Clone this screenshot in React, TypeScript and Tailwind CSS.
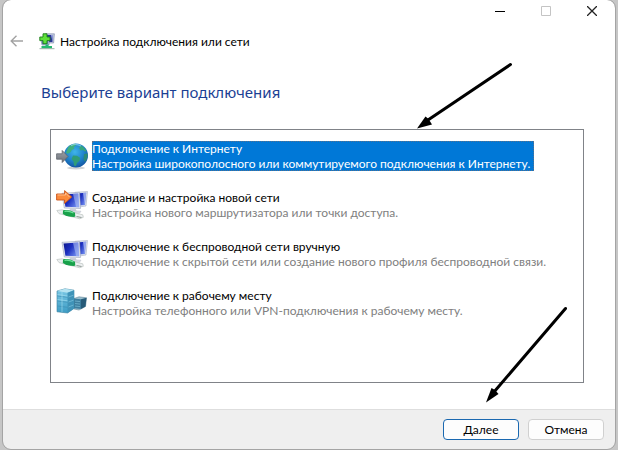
import type { ReactNode } from "react";

type Option = {
  title: string;
  detail: string;
  icon: ReactNode;
};

function BackIcon() {
  return (
    <svg width="14" height="12" viewBox="0 0 14 12" fill="none" stroke="#a3a3a3" strokeWidth="1.4" aria-hidden="true">
      <path d="M6.5 0.8 1.2 6l5.3 5.2M1.4 6H13" />
    </svg>
  );
}

function WizardIcon() {
  return (
    <svg width="16" height="17" viewBox="0 0 16 17" aria-hidden="true">
      <path d="M6 .8h9.400L14.600 10H8z" fill="#c3cbe0" stroke="#7a84a8" strokeWidth="0.600" />
      <path d="M8 2h6l-.6 7H8z" fill="#2b3796" />
      <path d="M12 2h2l-.6 6z" fill="#97a5e0" />
      <path d="M2 7h8v5H3z" fill="#b8c4e2" stroke="#6877a4" strokeWidth="0.600" />
      <path d="M3.500 7.500h5v3.500h-5z" fill="#2839a6" />
      <path d="M4 .8h4v3.200h3v3.600H8v3.200H4V7.600H.8V4H4z" fill="#5fe03a" stroke="#1c7d1a" strokeWidth="0.900" />
      <path d="M6.500 11.500h3v1.500H13v2.600H2.500V13h4z" fill="#25b970" />
      <path d="M.5 15.700h15" stroke="#9eb1a7" strokeWidth="1" />
    </svg>
  );
}

function GlobeIcon() {
  return (
    <svg width="32" height="32" viewBox="0 0 32 32" aria-hidden="true">
      <defs>
        <radialGradient id="ocean" cx="0.45" cy="0.35" r="0.7">
          <stop offset="0" stopColor="#3fb4ea" />
          <stop offset="0.55" stopColor="#1f83cc" />
          <stop offset="1" stopColor="#124f9c" />
        </radialGradient>
        <linearGradient id="greyArrow" x1="0" y1="0" x2="0" y2="1">
          <stop offset="0" stopColor="#a0a4aa" />
          <stop offset="1" stopColor="#696e76" />
        </linearGradient>
      </defs>
      <ellipse cx="20" cy="27" rx="9" ry="1.500" fill="#cfd3d6" />
      <circle cx="20" cy="14.500" r="12" fill="url(#ocean)" />
      <path d="M12 6.500c2-2.500 5-3.700 8-3.700l-.5 2-2 1.500 1 1.500-2.500 1-1.500 2.500-3 1.500-1.500-1z" fill="#3fb07e" />
      <path d="M24 4c3 1.300 5 3.500 6.500 6l-1.500.5-2-1.500-2.500.5-1.500-2.500 1.500-1z" fill="#35a67c" />
      <path d="M17 14.500l4 .3 3 2-.5 3-2.500 2.200-1 3-2-.5-.5-4-2-2.500z" fill="#2f9c78" />
      <path d="M28 13l3.600-.5c.4 3-.6 6-2.600 8.500l-1.500-3z" fill="#2b8b78" />
      <path d="M15 4.700c3-1.700 7-1.500 10 .3" stroke="#a5e0f5" strokeWidth="1.200" fill="none" opacity="0.600" />
      <path d="M.6 12.800h5.600V9.500l5.800 6-5.800 6v-3.300H.6z" fill="url(#greyArrow)" stroke="#5f656d" strokeWidth="0.800" />
    </svg>
  );
}

function Monitors() {
  return (
    <>
      <path d="M19 2.300 31.500 1.500 30 16l-7 1z" fill="#dbe1ee" stroke="#a9b1c4" strokeWidth="0.600" />
      <path d="M20 3.400l10.200-.7-1.300 12.300-7 .5z" fill="url(#screen)" />
      <path d="M27 3l3.200-.3-1.300 12.300z" fill="#a9b9f2" opacity="0.800" />
      <path d="M6 3.300 23.500 2.300 24.500 18.500 8.300 18z" fill="#e4e8f2" stroke="#98a2b9" strokeWidth="0.600" />
      <path d="M7.500 4.500l14.800-.9.900 13.700L9.400 16.700z" fill="url(#screen)" />
      <path d="M17 4l5.300-.4.900 13.700-3 -.1z" fill="#b2c4f6" opacity="0.550" />
      <path d="M14 18h5.500l1 3h-7z" fill="#ccd1da" />
      <path d="M12.500 20.600l12.500.6-1.500 2-11-.8z" fill="#dde0e8" stroke="#b2b7c2" strokeWidth="0.500" />
      <path d="M.8 20.500l5-.7 21 5 .5 2.500-3.500 1.500L3 23.600z" fill="#eceff0" stroke="#b4bcb8" strokeWidth="0.600" />
      <path d="M7 20.400c4-.9 9 .5 12 2.400l.3 4c-3.500.6-9.500-.9-12.500-2.900z" fill="#18a04a" />
      <path d="M8.500 21.300c3.500-.4 6.500.4 9 1.700" stroke="#6fe39a" strokeWidth="1.200" fill="none" />
      <path d="M20.500 26.500l5 1" stroke="#8d9692" fill="none" />
    </>
  );
}

function ScreenGradient() {
  return (
    <defs>
      <linearGradient id="screen" x1="0" y1="0" x2="1" y2="0.600">
        <stop offset="0" stopColor="#0b158c" />
        <stop offset="0.500" stopColor="#1d30c0" />
        <stop offset="1" stopColor="#6d88ec" />
      </linearGradient>
    </defs>
  );
}

function NewNetworkIcon() {
  return (
    <svg width="32" height="32" viewBox="0 0 32 32" aria-hidden="true">
      <ScreenGradient />
      <Monitors />
      <path d="M.6 4h8V.6L15.800 7l-7.200 6.400V10h-8z" fill="#fb8a3c" stroke="#c9531a" strokeWidth="0.900" />
      <path d="M1.500 5h8V3l4 4" stroke="#ffc293" strokeWidth="0.900" fill="none" />
    </svg>
  );
}

function WirelessIcon() {
  return (
    <svg width="32" height="32" viewBox="0 0 32 32" aria-hidden="true">
      <Monitors />
    </svg>
  );
}

function WorkplaceIcon() {
  return (
    <svg width="32" height="32" viewBox="0 0 32 32" aria-hidden="true">
      <defs>
        <linearGradient id="tower" x1="0" y1="0" x2="0" y2="1">
          <stop offset="0" stopColor="#7cc9e6" />
          <stop offset="1" stopColor="#3d9cc4" />
        </linearGradient>
      </defs>
      <path d="M18 10.500l5-1.700 7.500 1-1 8.700-6.500 3.500-5-1z" fill="#9bbfce" stroke="#68899a" strokeWidth="0.600" />
      <path d="M18 10.500l7 .8v9.700l-7-.8z" fill="#3d7e9f" />
      <path d="M25 11.300l5.500-1.500-1 8.700-4.500 2.500z" fill="#275b79" />
      <path d="M19 13l5 .6M19 15.500l5 .6M19 18l5 .6" stroke="#79bdd6" strokeWidth="0.700" />
      <path d="M1 3l8-2.200 9 1.400v18.300L11.500 25 1 23.800z" fill="url(#tower)" stroke="#397f9e" strokeWidth="0.600" />
      <path d="M1 3l8-2.200 9 1.400-6.500 2.600z" fill="#b5e3f1" />
      <path d="M11.500 4.800 18 2.200v18.300L11.500 25z" fill="#3f93b8" />
      <path d="M1.500 8l10 1.300M1.500 13l10 1.300M1.500 18l10 1.300" stroke="#3c8fb5" strokeWidth="0.700" />
      <path d="M1.500 6.500l10 1.500M1.500 11.500l10 1.300M6 4v20" stroke="#a7e0f1" strokeWidth="0.600" />
      <path d="M12.500 9l5-1.800M12.500 14l5-1.800M12.500 19l5-2" stroke="#7cc3dd" strokeWidth="0.700" />
    </svg>
  );
}

const options: Option[] = [
  {
    title: "Подключение к Интернету",
    detail: "Настройка широкополосного или коммутируемого подключения к Интернету.",
    icon: <GlobeIcon />,
  },
  {
    title: "Создание и настройка новой сети",
    detail: "Настройка нового маршрутизатора или точки доступа.",
    icon: <NewNetworkIcon />,
  },
  {
    title: "Подключение к беспроводной сети вручную",
    detail: "Подключение к скрытой сети или создание нового профиля беспроводной связи.",
    icon: <WirelessIcon />,
  },
  {
    title: "Подключение к рабочему месту",
    detail: "Настройка телефонного или VPN-подключения к рабочему месту.",
    icon: <WorkplaceIcon />,
  },
];

function OptionRow({ option, selected }: { option: Option; selected: boolean }) {
  return (
    <li>
      <button type="button" aria-pressed={selected} className="flex items-start gap-1 text-left">
        <span className="h-8 w-8 shrink-0">{option.icon}</span>
        <span
          className={
            selected
              ? "bg-[#0078d7] pr-1 text-white outline-1 -outline-offset-1 outline-dotted outline-[#57708c]"
              : "text-black"
          }
        >
          <span className="block whitespace-nowrap">{option.title}</span>
          <span className={selected ? "block whitespace-nowrap" : "block whitespace-nowrap text-[#808080]"}>
            {option.detail}
          </span>
        </span>
      </button>
    </li>
  );
}

export default function App() {
  return (
    <div className="relative h-screen bg-[#c6c6c6] px-[3px] pb-px font-['Lato','Noto_Sans',sans-serif] text-[12px] leading-[15px] text-black">
      <main className="flex h-full flex-col overflow-hidden rounded-lg bg-white outline-1 outline-[#a4a4a4]">
        <div className="flex h-[22px] shrink-0 justify-end">
          <button type="button" aria-label="Свернуть" className="flex w-[46px] items-center justify-center">
            <svg width="10" height="10" viewBox="0 0 10 10" stroke="#000" aria-hidden="true">
              <path d="M0 5.500h10" />
            </svg>
          </button>
          <button type="button" aria-label="Развернуть" disabled className="flex w-[46px] items-center justify-center">
            <svg width="10" height="10" viewBox="0 0 10 10" fill="none" stroke="#c4c4c4" aria-hidden="true">
              <path d="M.5.5h9v9h-9z" />
            </svg>
          </button>
          <button type="button" aria-label="Закрыть" className="flex w-[46px] items-center justify-center">
            <svg width="10" height="10" viewBox="0 0 10 10" stroke="#222" strokeWidth="1.300" aria-hidden="true">
              <path d="M0 0l10 10M10 0 0 10" />
            </svg>
          </button>
        </div>
        <header className="flex h-[38px] shrink-0 items-center px-[7px]">
          <button type="button" aria-label="Назад" className="mr-[15px]">
            <BackIcon />
          </button>
          <WizardIcon />
          <span className="ml-[5px]">Настройка подключения или сети</span>
        </header>
        <section className="flex grow flex-col pt-[22px] pr-[31px] pb-[26px] pl-[47px]">
          <h1 className="-ml-[9px] font-['Noto_Sans',sans-serif] text-[15px] leading-5 text-[#1b3f94]">
            Выберите вариант подключения
          </h1>
          <ul className="mt-[27px] flex grow flex-col gap-[17px] border border-[#808388] px-[5px] py-[11px]">
            {options.map((option, index) => (
              <OptionRow key={option.title} option={option} selected={index === 0} />
            ))}
          </ul>
        </section>
        <footer className="flex shrink-0 items-center justify-end gap-[9px] border-t border-[#dedede] bg-[#efefef] px-[11px] py-[9px]">
          <button type="button" className="h-[21px] w-19 rounded border border-[#1a68b0] bg-[#fdfdfd]">
            Далее
          </button>
          <button type="button" className="h-[21px] w-19 rounded border border-[#d0d0d0] bg-[#fdfdfd]">
            Отмена
          </button>
        </footer>
      </main>
      <svg width="98" height="68" viewBox="415 62 98 68" className="pointer-events-none absolute top-[62px] left-[415px]" aria-hidden="true">
        <path d="M510.500 64.500 428 120" stroke="#000" strokeWidth="3" strokeLinecap="round" />
        <path d="M417 128.500l8.500-12 3 2.500 3.500 5.500z" />
      </svg>
      <svg width="86" height="100" viewBox="484 305 86 100" className="pointer-events-none absolute top-[305px] left-[484px]" aria-hidden="true">
        <path d="M565.500 308.500 494 392" stroke="#000" strokeWidth="3" strokeLinecap="round" />
        <path d="M486 402.500l5.500-14.500 3.500 2 3.500 4z" />
      </svg>
    </div>
  );
}
